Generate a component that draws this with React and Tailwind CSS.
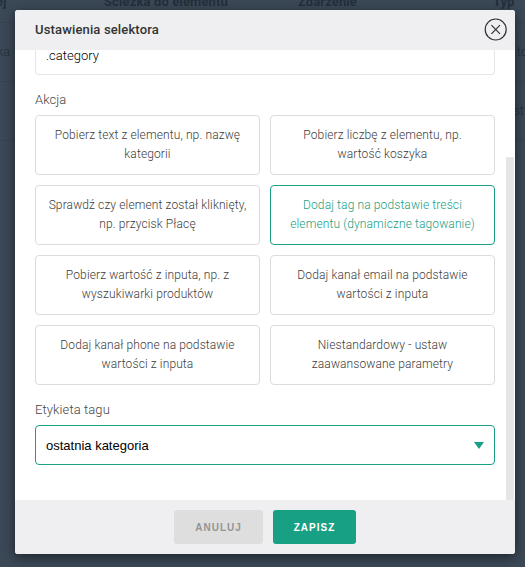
const actions = [
  ["Pobierz text z elementu, np. nazwę", "kategorii"],
  ["Pobierz liczbę z elementu, np.", "wartość koszyka"],
  ["Sprawdź czy element został kliknięty,", "np. przycisk Płacę"],
  ["Dodaj tag na podstawie treści", "elementu (dynamiczne tagowanie)"],
  ["Pobierz wartość z inputa, np. z", "wyszukiwarki produktów"],
  ["Dodaj kanał email na podstawie", "wartości z inputa"],
  ["Dodaj kanał phone na podstawie", "wartości z inputa"],
  ["Niestandardowy - ustaw", "zaawansowane parametry"],
];
const selected = 3;

function Backdrop() {
  return (
    <div className="flex h-full flex-col text-[13px] text-[#232f3c]">
      <div className="grid h-[23px] shrink-0 grid-cols-[104px_194px_195px_1fr] border-b border-[#364351] font-bold leading-[15px]">
        <span className="-mt-[6px] -ml-[4px]">ej</span>
        <span className="-mt-[6px] tracking-[0.12px]">Ścieżka do elementu</span>
        <span className="-mt-[6px] tracking-[0.1px]">Zdarzenie</span>
        <span className="-mt-[6px]">Typ</span>
      </div>
      <div className="flex h-[59px] shrink-0 items-center justify-between border-b border-[#364351] font-light">
        <span className="-ml-[3px]">ka</span>
        <span className="-mr-[3px]">to</span>
      </div>
      <div className="flex h-[59px] shrink-0 items-center justify-end border-b border-[#364351] font-light">
        <span className="mr-px">st</span>
      </div>
    </div>
  );
}

export default function App() {
  return (
    <div className="relative h-[567px] w-[525px] overflow-hidden bg-[#3b4856] font-['Roboto',sans-serif]">
      <Backdrop />
      <div className="absolute top-[10px] left-[15px] flex h-[544px] w-[500px] flex-col overflow-hidden rounded-[3px] bg-white shadow-[0_3px_12px_rgba(0,0,0,0.5)]">
        <header className="flex h-[40px] shrink-0 items-center justify-between bg-[#efeff1] pr-[8px] pl-[20px]">
          <h1 className="text-[13px] font-medium tracking-[0.15px] text-[#333]">Ustawienia selektora</h1>
          <button aria-label="Zamknij" className="-mt-px">
            <svg width="23" height="23" viewBox="0 0 23 23" fill="none" stroke="#333" strokeWidth="1.2">
              <circle cx="11.7" cy="11.5" r="10.5" />
              <path d="M7.4 7.2 16 15.8M16 7.2 7.4 15.8" />
            </svg>
          </button>
        </header>
        <main className="flex h-[450px] shrink-0">
          <div className="flex w-[491px] shrink-0 flex-col pr-[11px] pl-[20px]">
            <div className="h-[25px] shrink-0 overflow-hidden rounded-b-[4px] border border-t-0 border-[#e6e6e6] px-[10px] text-[13px] leading-[14px] font-light text-black">
              <span className="block -mt-px">.category</span>
            </div>
            <div className="mt-[15px] h-[20px] text-[13px] leading-[20px] font-light tracking-[0.08px] text-[#444]">Akcja</div>
            <div className="mt-[5px] grid grid-cols-2 gap-[10px]">
              {actions.map(([a, b], i) => (
                <button
                  key={i}
                  className={
                    "h-[60px] rounded-[4px] border text-center text-[12px] leading-[19px] font-light tracking-[0.12px] whitespace-nowrap " +
                    (i === selected ? "border-[#18a085] text-[#18a085]" : "border-[#dcdcdc] text-[#3c3c3c]")
                  }
                >
                  <span className="block">{a}</span>
                  <span className="block">{b}</span>
                </button>
              ))}
            </div>
            <div className="mt-[15px] h-[20px] text-[13px] leading-[20px] font-light tracking-[0.1px] text-[#444]">Etykieta tagu</div>
            <div className="mt-[5px] flex h-[40px] items-center justify-between rounded-[4px] border border-[#18a085] pr-[10px] pl-[10px] font-['Liberation_Sans',sans-serif] text-[13px] text-black">
              <span className="pt-[2px]">ostatnia kategoria</span>
              <svg width="10" height="7" viewBox="0 0 10 7" fill="#18a085">
                <path d="M0 0H10L5 7Z" />
              </svg>
            </div>
          </div>
          <div className="mt-[107px] w-[8px] bg-[#e6e6e6]" />
        </main>
        <footer className="flex flex-1 items-start justify-center gap-[10px] bg-[#efeff1] pt-[10px] font-['Liberation_Sans',sans-serif] text-[10px] font-bold tracking-[1px]">
          <button className="h-[34px] w-[89px] rounded-[3px] bg-[#dedede] pt-px text-[#959595]">ANULUJ</button>
          <button className="h-[34px] w-[83px] rounded-[3px] bg-[#18a085] pt-px text-white">ZAPISZ</button>
        </footer>
      </div>
    </div>
  );
}
